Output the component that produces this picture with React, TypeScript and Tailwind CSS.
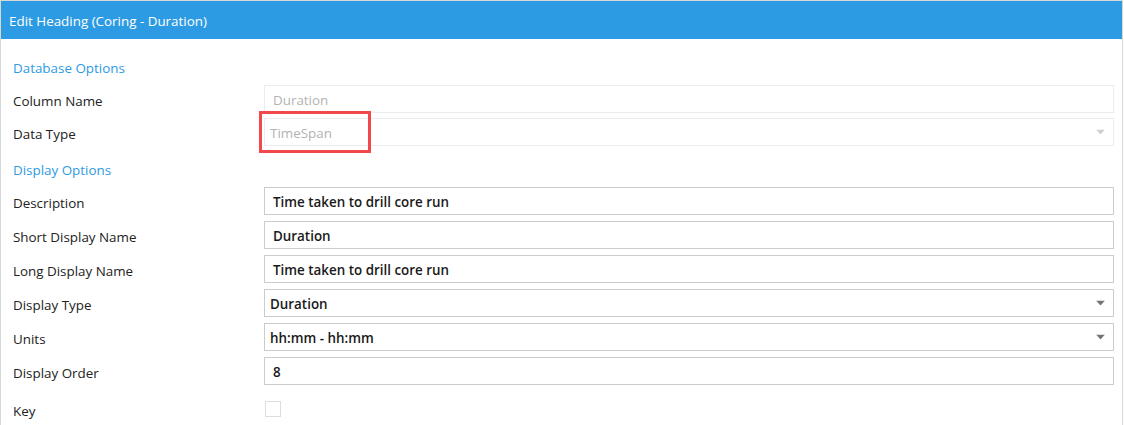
import React from "react";

const font = { fontFamily: '"Open Sans", "Noto Sans", sans-serif' };

function Caret({ disabled }: { disabled?: boolean }) {
  return (
    <svg width="9" height="5" viewBox="0 0 9 5" className="absolute right-[8px] top-1/2 -translate-y-1/2">
      <path d="M0 0 H9 L4.5 5 Z" fill={disabled ? "#d0d0d0" : "#757575"} />
    </svg>
  );
}

function TextBox({ value, disabled }: { value: string; disabled?: boolean }) {
  return (
    <div
      className={`h-[28px] flex items-center pl-[8px] pt-[2px] border ${
        disabled ? "border-[#ececec] text-[#b3b3b3]" : "border-[#cccccc] text-[#1a1a1a] font-semibold"
      }`}
    >
      {value}
    </div>
  );
}

function SelectBox({ value, disabled }: { value: string; disabled?: boolean }) {
  return (
    <div
      className={`relative h-[28px] flex items-center pl-[5px] pt-[2px] border ${
        disabled ? "border-[#ececec] text-[#b3b3b3]" : "border-[#cccccc] text-[#1a1a1a] font-semibold"
      }`}
    >
      {value}
      <Caret disabled={disabled} />
    </div>
  );
}

function Row({ label, children, className = "" }: { label: string; children: React.ReactNode; className?: string }) {
  return (
    <div className={`grid grid-cols-[251px_850px] items-center ${className}`}>
      <div className="text-[#222] translate-y-[1.5px]">{label}</div>
      {children}
    </div>
  );
}

export default function App() {
  return (
    <div className="w-[1124px] h-[425px] bg-white overflow-hidden text-[13.4px]" style={font}>
      <div className="h-full border-t border-l border-r border-[#d8d8d8] w-[1123px]">
        <div className="h-[38px] bg-[#2d9be3] text-white flex items-center pl-[8px] pt-[2px]">
          Edit Heading (Coring - Duration)
        </div>

        <div className="pl-[12px]">
          <div className="h-[28px] mt-[14px] flex items-center text-[#2d9be3] translate-y-[1px]">Database Options</div>
          <Row label="Column Name" className="mt-[4px]">
            <TextBox value="Duration" disabled />
          </Row>
          <Row label="Data Type" className="mt-[5px]">
            <div className="relative">
              <SelectBox value="TimeSpan" disabled />
              <div className="absolute left-[-5px] top-[-7px] w-[112px] h-[42px] border-[3px] border-[#f2484b]" />
            </div>
          </Row>

          <div className="h-[28px] mt-[9px] flex items-center text-[#2d9be3] translate-y-[1px]">Display Options</div>
          <Row label="Description" className="mt-[4px]">
            <TextBox value="Time taken to drill core run" />
          </Row>
          <Row label="Short Display Name" className="mt-[6px]">
            <TextBox value="Duration" />
          </Row>
          <Row label="Long Display Name" className="mt-[6px]">
            <TextBox value="Time taken to drill core run" />
          </Row>
          <Row label="Display Type" className="mt-[6px]">
            <SelectBox value="Duration" />
          </Row>
          <Row label="Units" className="mt-[6px]">
            <SelectBox value="hh:mm - hh:mm" />
          </Row>
          <Row label="Display Order" className="mt-[6px]">
            <TextBox value="8" />
          </Row>
          <Row label="Key" className="mt-[10px] h-[28px]">
            <div className="h-[16px] w-[16px] ml-[1px] border border-[#dedede]" />
          </Row>
        </div>
      </div>
    </div>
  );
}
